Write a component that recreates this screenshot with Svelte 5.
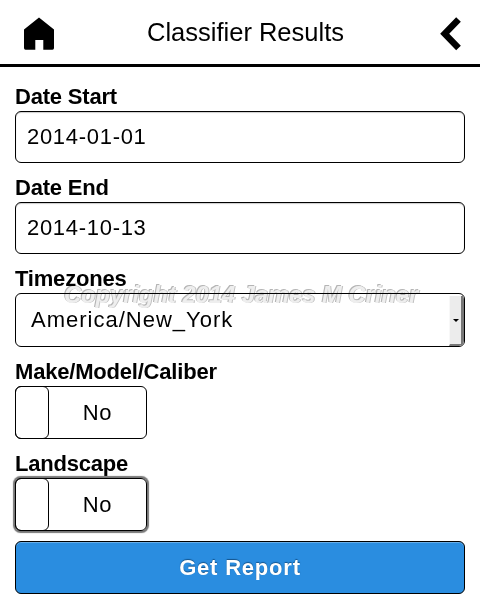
<script>
  let start = $state('2014-01-01');
  let end = $state('2014-10-13');
</script>

<div class="page">
  <header>
    <svg class="home" width="32" height="34" viewBox="0 0 32 34"><path d="M0 12.500 15 .5 30 12.500V31Q30 32.700 28.500 32.700H19.300V23H11.300V32.700H1.500Q0 32.700 0 31Z" /></svg>
    <h1>Classifier Results</h1>
    <svg class="back" width="21" height="34" viewBox="0 0 21 34"><path d="M18.500 2.500 4.700 16.700 18.500 31" /></svg>
  </header>
  <main>
    <label for="start" class="l1">Date Start</label>
    <input id="start" bind:value={start} />
    <label for="end" class="l2">Date End</label>
    <input id="end" bind:value={end} />
    <label for="zone" class="l3">Timezones</label>
    <div class="select" id="zone"><span>America/New_York</span><i><b></b></i></div>
    <label for="make" class="l4">Make/Model/Caliber</label>
    <div class="toggle" id="make"><i></i><span>No</span></div>
    <label for="landscape" class="l5">Landscape</label>
    <div class="toggle focus" id="landscape"><i></i><span>No</span></div>
    <button>Get Report</button>
  </main>
  <div class="watermark">Copyright 2014 James M Criner</div>
</div>

<style>
  .page { position: relative; width: 480px; height: 594px; overflow: hidden; background: #fff; color: #000; font-family: "Liberation Sans", Arial, sans-serif; }
  .page * { box-sizing: border-box; }
  header { height: 67px; border-bottom: 3px solid #000; display: flex; align-items: center; padding: 3px 19px 0 24px; }
  h1 { flex: 1; margin: 0 0 3px; padding-right: 5px; text-align: center; font-size: 25.5px; font-weight: 400; line-height: 30px; white-space: nowrap; }
  .home, .back { flex: none; }
  .back path { fill: none; stroke: #000; stroke-width: 6.5; }
  main { padding: 18px 15px 0; display: flex; flex-direction: column; align-items: stretch; }
  label { height: 26px; line-height: 24px; font-size: 22px; font-weight: 700; letter-spacing: -.2px; white-space: nowrap; align-self: flex-start; }
  .l2, .l3, .l4, .l5 { margin-top: 13px; }
  input { height: 52px; width: 100%; margin: 0; border: 1px solid #000; border-radius: 6px; padding: 0 11px; background: #fff; font: 22px "Liberation Sans", Arial, sans-serif; letter-spacing: .7px; color: #000; outline: none; box-shadow: inset 0 1px 1px #ccc; }
  .select { height: 54px; border: 1px solid #000; border-radius: 6px; display: flex; align-items: center; justify-content: space-between; font-size: 22px; letter-spacing: 1px; padding-left: 15px; overflow: hidden; }
  .select i { width: 15px; height: 50px; margin-top: 2px; background: #ececec; border-left: 1px solid #f8f8f8; border-right: 3px solid #777; border-bottom: 2px solid #777; display: flex; align-items: center; justify-content: center; }
  .select b { border: 3px solid transparent; border-top: 3px solid #000; border-bottom: 0; }
  .toggle { width: 132px; height: 53px; border: 1px solid #000; border-radius: 6px; display: flex; align-items: center; font-size: 22px; letter-spacing: .8px; }
  .toggle i { width: 34px; height: 53px; margin: -1px 0 -1px -1px; border: 1px solid #000; border-radius: 6px; }
  .toggle span { flex: 1; text-align: center; padding-top: 1px; }
  .focus { box-shadow: 0 0 1px 1.5px #777; }
  button { height: 53px; margin-top: 10px; border: 1px solid #000; border-radius: 6px; padding: 1px 0 0; background: #2a8de0; color: #fff; font: 700 22px "Liberation Sans", Arial, sans-serif; letter-spacing: .8px; text-shadow: 0 -1px 1px #14548c; box-shadow: inset 0 1px 0 #68aee9; }
  .watermark { position: absolute; left: 64px; top: 282px; font-size: 23.7px; line-height: 27px; font-weight: 700; font-style: italic; white-space: nowrap; color: #eee; text-shadow: -1px -1px 0 #b5b5b5, 1px 0 0 #c0c0c0; mix-blend-mode: multiply; pointer-events: none; }
</style>
